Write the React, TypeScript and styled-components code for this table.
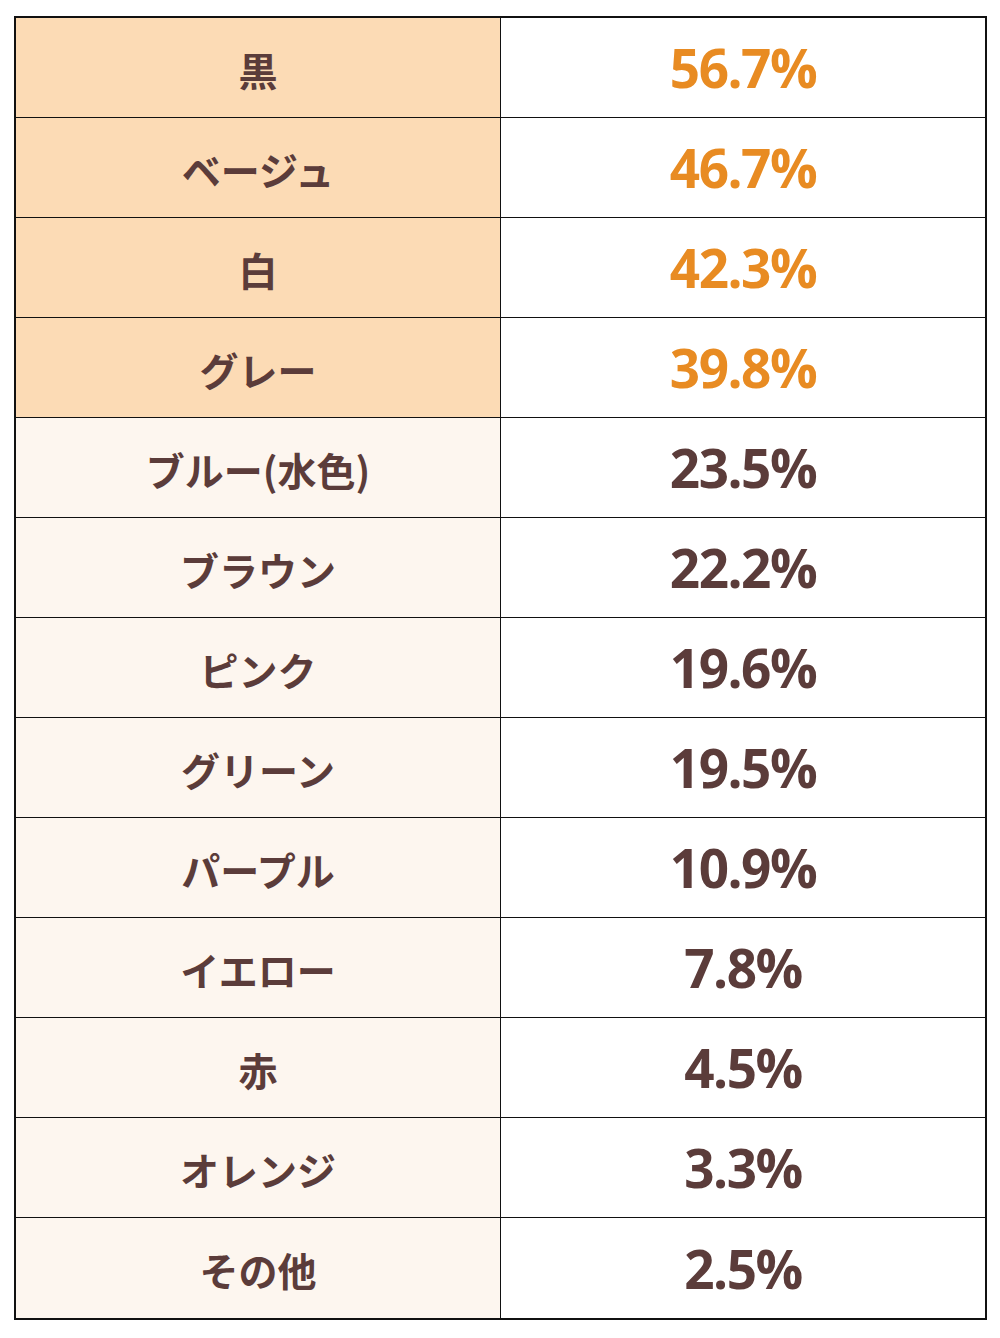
import React from "react";
import styled, { createGlobalStyle } from "styled-components";

type ColorShare = {
  name: string;
  rate: string;
  top: boolean;
};

const data: ColorShare[] = [
  { name: "黒", rate: "56.7%", top: true },
  { name: "ベージュ", rate: "46.7%", top: true },
  { name: "白", rate: "42.3%", top: true },
  { name: "グレー", rate: "39.8%", top: true },
  { name: "ブルー(水色)", rate: "23.5%", top: false },
  { name: "ブラウン", rate: "22.2%", top: false },
  { name: "ピンク", rate: "19.6%", top: false },
  { name: "グリーン", rate: "19.5%", top: false },
  { name: "パープル", rate: "10.9%", top: false },
  { name: "イエロー", rate: "7.8%", top: false },
  { name: "赤", rate: "4.5%", top: false },
  { name: "オレンジ", rate: "3.3%", top: false },
  { name: "その他", rate: "2.5%", top: false },
];

const GlobalStyle = createGlobalStyle`
  html, body {
    margin: 0;
    padding: 0;
    background: #ffffff;
  }
`;

const Page = styled.div`
  width: 1000px;
  height: 1338px;
  padding: 16px 0 0 14px;
  box-sizing: border-box;
`;

const Table = styled.div`
  width: 973px;
  border: 2px solid #111;
  box-sizing: border-box;
  display: grid;
  grid-template-columns: 485px 1fr;
`;

const Label = styled.div<{ $top: boolean; $last: boolean }>`
  height: 100px;
  box-sizing: border-box;
  display: flex;
  align-items: center;
  justify-content: center;
  padding-top: 2px;
  background: ${(p) => (p.$top ? "#fcdbb5" : "#fdf6ef")};
  border-right: 1px solid #111;
  border-bottom: ${(p) => (p.$last ? "none" : "1px solid #111")};
  color: #5b3c3a;
  font-family: "Noto Sans CJK JP", "Noto Sans", sans-serif;
  font-weight: 700;
  font-size: 39px;
`;

const Rate = styled.div<{ $top: boolean; $last: boolean }>`
  height: 100px;
  box-sizing: border-box;
  display: flex;
  align-items: center;
  justify-content: center;
  padding-top: 0;
  background: #ffffff;
  border-bottom: ${(p) => (p.$last ? "none" : "1px solid #111")};
  color: ${(p) => (p.$top ? "#e88b22" : "#5b3c3a")};
  font-family: "Open Sans", "Noto Sans", sans-serif;
  font-weight: 700;
  font-size: 53px;
  letter-spacing: -1.5px;
`;

export default function App() {
  return (
    <>
      <GlobalStyle />
      <Page>
        <Table>
          {data.map((row, index) => {
            const last = index === data.length - 1;
            return (
              <React.Fragment key={row.name}>
                <Label $top={row.top} $last={last}>
                  {row.name}
                </Label>
                <Rate $top={row.top} $last={last}>
                  {row.rate}
                </Rate>
              </React.Fragment>
            );
          })}
        </Table>
      </Page>
    </>
  );
}
